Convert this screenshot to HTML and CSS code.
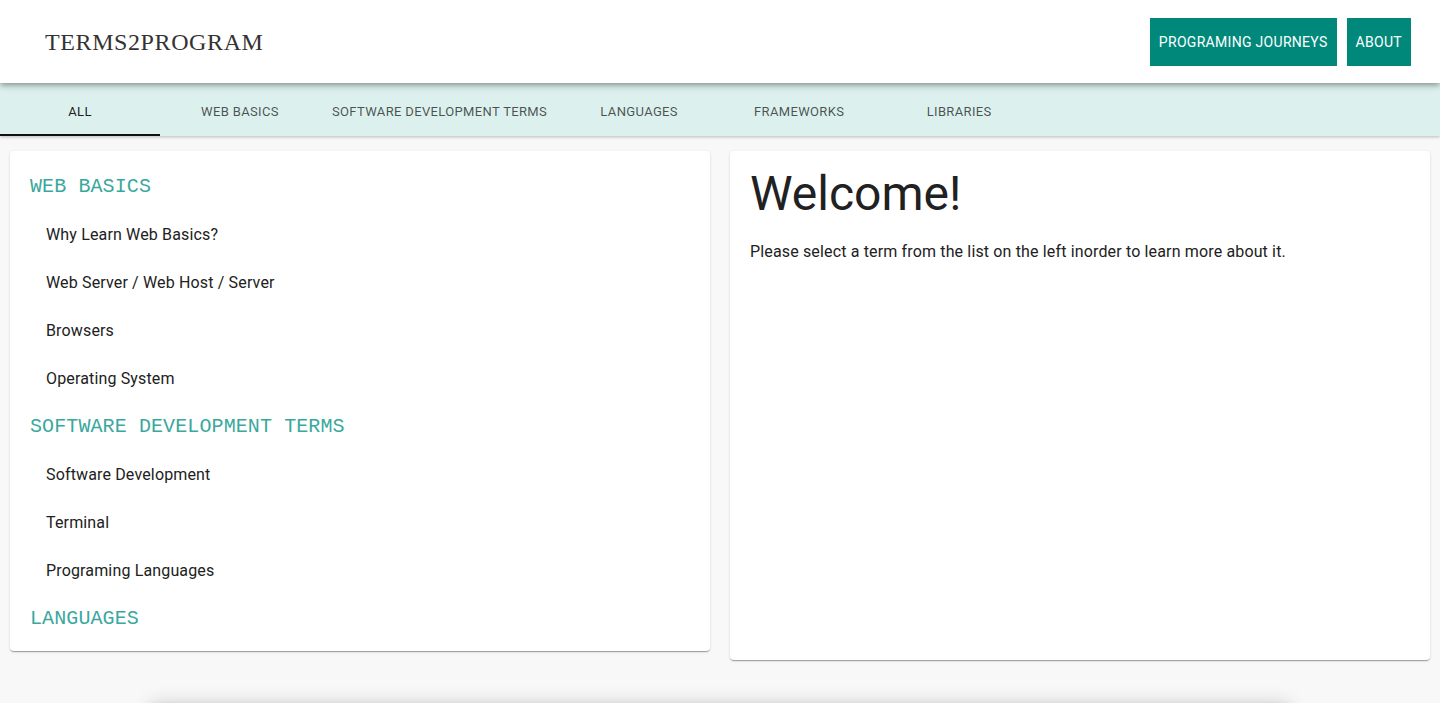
FILE: index.html
```html
<!DOCTYPE html>
<html>
<head>
<meta charset="utf-8">
<link rel="stylesheet" href="styles.css">
</head>
<body>
<header class="topbar">
  <div class="logo">TERMS2PROGRAM</div>
  <nav class="top-actions">
    <a class="btn">PROGRAMING JOURNEYS</a>
    <a class="btn">ABOUT</a>
  </nav>
</header>
<div class="tabbar">
  <div class="tab tab-active">ALL</div>
  <div class="tab">WEB BASICS</div>
  <div class="tab">SOFTWARE DEVELOPMENT TERMS</div>
  <div class="tab">LANGUAGES</div>
  <div class="tab">FRAMEWORKS</div>
  <div class="tab">LIBRARIES</div>
</div>
<main class="content">
  <section class="card list-card">
    <div class="group-title">WEB BASICS</div>
    <div class="item">Why Learn Web Basics?</div>
    <div class="item">Web Server / Web Host / Server</div>
    <div class="item">Browsers</div>
    <div class="item">Operating System</div>
    <div class="group-title">SOFTWARE DEVELOPMENT TERMS</div>
    <div class="item">Software Development</div>
    <div class="item">Terminal</div>
    <div class="item">Programing Languages</div>
    <div class="group-title">LANGUAGES</div>
  </section>
  <section class="card detail-card">
    <h1 class="welcome">Welcome!</h1>
    <p class="intro">Please select a term from the list on the left inorder to learn more about it.</p>
  </section>
</main>
<footer class="footer"></footer>
</body>
</html>
```
FILE: styles.css
```css
* { box-sizing: border-box; }
html, body { margin: 0; padding: 0; }
body {
  background: #f8f8f8;
  font-family: Roboto, "Liberation Sans", sans-serif;
  color: #212121;
  overflow: hidden;
}
.topbar {
  position: relative;
  z-index: 2;
  height: 83px;
  background: #fff;
  display: flex;
  align-items: center;
  justify-content: space-between;
  padding: 1px 29px 0 45px;
  box-shadow: 0 2px 4px -1px rgba(0,0,0,0.2), 0 4px 5px 0 rgba(0,0,0,0.14), 0 1px 10px 0 rgba(0,0,0,0.12);
}
.logo {
  font-family: "Liberation Serif", "DejaVu Serif", serif;
  font-size: 24px;
  letter-spacing: 0.6px;
  color: #333;
}
.top-actions { display: flex; gap: 10px; }
.btn {
  height: 48px;
  display: flex;
  align-items: center;
  padding: 0 9px;
  background: #00897b;
  color: #fff;
  font-size: 14px;
  letter-spacing: 0.3px;
  text-decoration: none;
}
.tabbar {
  position: relative;
  z-index: 1;
  height: 53px;
  padding-top: 3px;
  background: #dcf1ee;
  display: flex;
  box-shadow: 0 1px 3px rgba(0,0,0,0.25);
}
.tab {
  min-width: 160px;
  height: 50px;
  padding: 0 12px;
  display: flex;
  align-items: center;
  justify-content: center;
  font-size: 13px;
  letter-spacing: 0.35px;
  color: rgba(0,0,0,0.68);
}
.tab-active {
  color: rgba(0,0,0,0.9);
  border-bottom: 2px solid #111;
  padding-top: 2px;
}
.content {
  display: grid;
  grid-template-columns: 1fr 1fr;
  gap: 20px;
  padding: 15px 10px 0;
  align-items: start;
}
.card {
  background: #fff;
  border-radius: 4px;
  box-shadow: 0 2px 1px -1px rgba(0,0,0,0.2), 0 1px 1px 0 rgba(0,0,0,0.14), 0 1px 3px 0 rgba(0,0,0,0.12);
}
.list-card {
  height: 500px;
  overflow: hidden;
  padding-top: 11px;
}
.group-title {
  height: 48px;
  display: flex;
  align-items: center;
  padding-left: 20px;
  font-family: "Liberation Mono", "Courier New", monospace;
  font-size: 20px;
  letter-spacing: 0.1px;
  color: #3aa89d;
}
.item {
  height: 48px;
  display: flex;
  align-items: center;
  padding-left: 36px;
  font-size: 16px;
  letter-spacing: 0.15px;
  color: #212121;
}
.detail-card {
  height: 509px;
  padding: 15px 20px;
}
.welcome {
  margin: 0;
  font-size: 48px;
  font-weight: 400;
  line-height: 56px;
  color: #212121;
}
.intro {
  margin: 18px 0 0;
  font-size: 16px;
  line-height: 24px;
  letter-spacing: 0.15px;
}
.footer {
  height: 60px;
  margin: 43px 150px 0;
  background: #fff;
  box-shadow: 0 3px 5px -1px rgba(0,0,0,0.2), 0 6px 10px 0 rgba(0,0,0,0.14), 0 1px 18px 0 rgba(0,0,0,0.18);
}
```
